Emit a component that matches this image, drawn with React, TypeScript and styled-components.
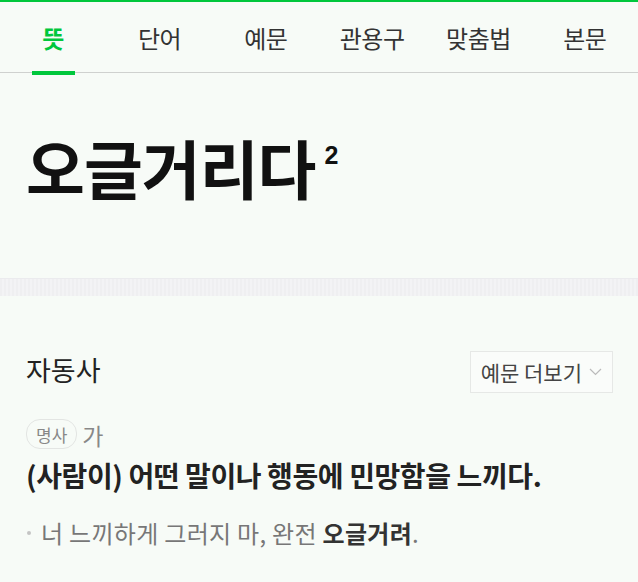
import React from 'react';
import styled, { createGlobalStyle } from 'styled-components';

const GlobalStyle = createGlobalStyle`
    html, body {
        margin: 0;
        padding: 0;
        background: #f7fbf7;
    }
    body {
        font-family: "Noto Sans CJK KR", "Noto Sans", sans-serif;
        color: #222;
    }
`;

const Page = styled.div`
    width: 638px;
    min-height: 582px;
    background: #f7fbf7;
    overflow: hidden;
`;

const TabBar = styled.nav`
    display: flex;
    height: 70px;
    border-top: 2px solid #00c73c;
    border-bottom: 1px solid #cfd1cf;
`;

const Tab = styled.a<{ active?: boolean }>`
    flex: 1;
    position: relative;
    display: flex;
    align-items: center;
    justify-content: center;
    font-size: 24px;
    color: ${(p) => (p.active ? '#00c73c' : '#333')};
    font-weight: ${(p) => (p.active ? 700 : 400)};
    letter-spacing: -0.5px;

    &::after {
        content: '';
        display: ${(p) => (p.active ? 'block' : 'none')};
        position: absolute;
        left: 50%;
        bottom: -3px;
        width: 43px;
        margin-left: -21.5px;
        height: 4px;
        background: #00c73c;
    }
`;

const Header = styled.header`
    padding: 57px 26px 0;
    height: 148px;
`;

const Title = styled.h1`
    margin: 0;
    font-size: 64px;
    line-height: 72px;
    font-weight: 700;
    color: #111;
    letter-spacing: -1px;

    sup {
        font-size: 25px;
        font-family: "Liberation Sans", Arial, sans-serif;
        font-weight: 700;
        margin-left: 9px;
        vertical-align: top;
        position: relative;
        top: -11px;
        letter-spacing: 0;
    }
`;

const Divider = styled.div`
    height: 17px;
    background: repeating-linear-gradient(90deg, #efeff1 0 2px, #f3f3f5 2px 4px);
    border-top: 1px solid #ebebee;
`;

const Section = styled.section`
    padding: 55px 25px 0 26px;
`;

const SectionHead = styled.div`
    display: flex;
    align-items: center;
    justify-content: space-between;
`;

const WordClass = styled.h2`
    margin: 0;
    margin-top: -6px;
    font-size: 27px;
    font-weight: 400;
    color: #222;
    letter-spacing: 0;
`;

const MoreButton = styled.button`
    display: flex;
    align-items: center;
    gap: 7px;
    height: 42px;
    padding: 0 10px 0 10px;
    border: 1px solid #e6e8e6;
    background: #fafcfa;
    font-family: inherit;
    font-size: 21px;
    color: #444;
    letter-spacing: 0;
`;

const Sense = styled.div`
    margin-top: 25px;
`;

const SenseHead = styled.div`
    display: flex;
    align-items: center;
    gap: 5px;
`;

const Badge = styled.span`
    display: inline-flex;
    align-items: center;
    height: 28px;
    padding: 0 9px;
    border: 1px solid #e3e5e3;
    border-radius: 14px;
    font-size: 17px;
    color: #888;
    margin-top: -2px;
`;

const Mark = styled.span`
    font-size: 23px;
    color: #888;
`;

const Meaning = styled.p`
    margin: 3px 0 0;
    font-size: 28px;
    font-weight: 700;
    color: #222;
    letter-spacing: -0.4px;
`;

const ExampleList = styled.ul`
    list-style: none;
    margin: 20px 0 0;
    padding: 0;
`;

const Example = styled.li`
    position: relative;
    padding-left: 15px;
    font-size: 24px;
    color: #777;
    letter-spacing: 0.3px;

    &::before {
        content: '';
        position: absolute;
        left: 1px;
        top: 50%;
        width: 4px;
        height: 4px;
        margin-top: -2px;
        border-radius: 50%;
        background: #c4c4c4;
    }

    b {
        color: #333;
        font-weight: 700;
    }
`;

const Chevron = () => (
    <svg width="13" height="8" viewBox="0 0 13 8" fill="none">
        <path d="M1 1l5.5 5.5L12 1" stroke="#bbb" strokeWidth="1.2" />
    </svg>
);

const tabs = ['뜻', '단어', '예문', '관용구', '맞춤법', '본문'];

export default function App() {
    return (
        <Page>
            <GlobalStyle />
            <TabBar>
                {tabs.map((t, i) => (
                    <Tab key={t} active={i === 0}>
                        {t}
                    </Tab>
                ))}
            </TabBar>

            <Header>
                <Title>
                    오글거리다<sup>2</sup>
                </Title>
            </Header>

            <Divider />

            <Section>
                <SectionHead>
                    <WordClass>자동사</WordClass>
                    <MoreButton>
                        예문 더보기 <Chevron />
                    </MoreButton>
                </SectionHead>

                <Sense>
                    <SenseHead>
                        <Badge>명사</Badge>
                        <Mark>가</Mark>
                    </SenseHead>
                    <Meaning>(사람이) 어떤 말이나 행동에 민망함을 느끼다.</Meaning>
                    <ExampleList>
                        <Example>
                            너 느끼하게 그러지 마, 완전 <b>오글거려</b>.
                        </Example>
                    </ExampleList>
                </Sense>
            </Section>
        </Page>
    );
}
